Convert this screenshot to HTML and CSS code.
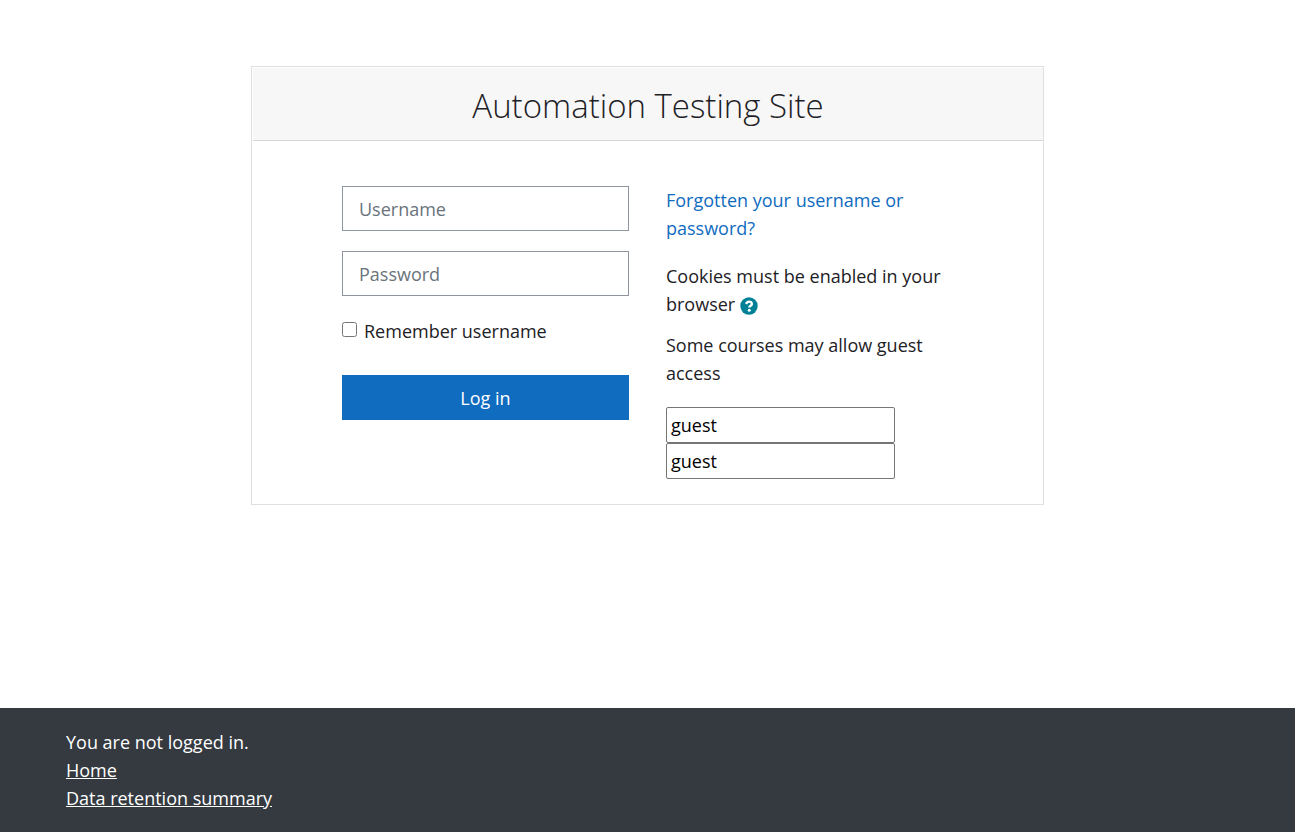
FILE: index.html
```html
<!DOCTYPE html>
<html lang="en">
<head>
<meta charset="utf-8">
<title>Automation Testing Site: Log in</title>
<link rel="stylesheet" href="styles.css">
</head>
<body>
<main class="page">
  <section class="card">
    <h1 class="card-header">Automation Testing Site</h1>
    <div class="card-body">
      <form class="login">
        <input class="field" type="text" placeholder="Username" aria-label="Username">
        <input class="field" type="password" placeholder="Password" aria-label="Password">
        <div class="remember">
          <input class="check" type="checkbox" id="remember">
          <label for="remember">Remember username</label>
        </div>
        <button class="submit" type="submit">Log in</button>
      </form>
      <div class="info">
        <p class="forgot"><a class="link" href="#">Forgotten your username or password?</a></p>
        <p class="cookies">Cookies must be enabled in your browser
          <a class="help" href="#" aria-label="Help with cookies"><svg class="help-icon" viewBox="0 0 18 18" aria-hidden="true"><circle cx="9" cy="9" r="8.7" fill="#008196"/><path d="M6.1 7C6.7 5.4 7.7 4.6 9 4.6c1.7 0 2.9 1 2.9 2.3 0 1.8-2.6 1.8-2.6 3.6" fill="none" stroke="#fff" stroke-width="2.4"/><circle cx="9.2" cy="13.3" r="1.5" fill="#fff"/></svg></a>
        </p>
        <p class="guest-note">Some courses may allow guest access</p>
        <form class="guest">
          <input class="guest-field" type="text" value="guest" aria-label="Guest username">
          <input class="guest-field" type="text" value="guest" aria-label="Guest password">
        </form>
      </div>
    </div>
  </section>
</main>
<footer class="footer">
  <div>You are not logged in.</div>
  <div><a class="footer-link" href="#">Home</a></div>
  <div><a class="footer-link" href="#">Data retention summary</a></div>
</footer>
</body>
</html>
```
FILE: styles.css
```css
* { box-sizing: border-box; }
body {
  display: flex;
  flex-direction: column;
  min-height: 100vh;
  margin: 0;
  background: #fff;
  color: #1d2125;
  font: 18px/28px "Segoe UI", "Open Sans", "Noto Sans", sans-serif;
}
input, button { font: inherit; color: #000; margin: 0; }
p { margin: 0; }
.page { flex: 1; padding: 66px 20px; }
.card {
  max-width: 793px;
  margin: 0 auto;
  padding: 1px 0 0 1px;
  border: 1px solid #dfdfdf;
}
.card-header {
  margin: 0;
  padding: 16px 20px 12px;
  border-bottom: 1px solid #d6d6d6;
  background: #f7f7f7;
  font-size: 33px;
  font-weight: 300;
  line-height: 44px;
  text-align: center;
}
.card-body {
  display: grid;
  grid-template-columns: 287px 287px;
  column-gap: 37px;
  padding: 45px 20px 25px 89px;
}
.login { display: flex; flex-direction: column; }
.field {
  width: 100%;
  height: 45px;
  margin-bottom: 20px;
  padding: 8px 16px;
  border: 1px solid #8f959e;
  border-radius: 0;
  background: #fff;
}
.field::placeholder { color: #6a737b; opacity: 1; }
.remember {
  display: flex;
  align-items: flex-start;
  gap: 7px;
  padding: 1px 0 30px;
}
.check { width: 15px; height: 15px; margin-top: 5px; }
.submit {
  height: 45px;
  border: 0;
  background: #0f6cbf;
  color: #fff;
}
.link { color: #0f6cbf; text-decoration: none; }
.forgot { margin-bottom: 20px; }
.cookies { margin-bottom: 13px; }
.help-icon { width: 18px; height: 18px; vertical-align: -4px; }
.guest-note { margin-bottom: 20px; }
.guest { display: flex; flex-direction: column; }
.guest-field {
  width: 229px;
  height: 36px;
  padding: 2px 4px;
  border: 1px solid #767676;
  border-radius: 2px;
}
.footer {
  padding: 20px 66px;
  background: #343a40;
  color: #fff;
}
.footer-link { color: #fff; }
```
